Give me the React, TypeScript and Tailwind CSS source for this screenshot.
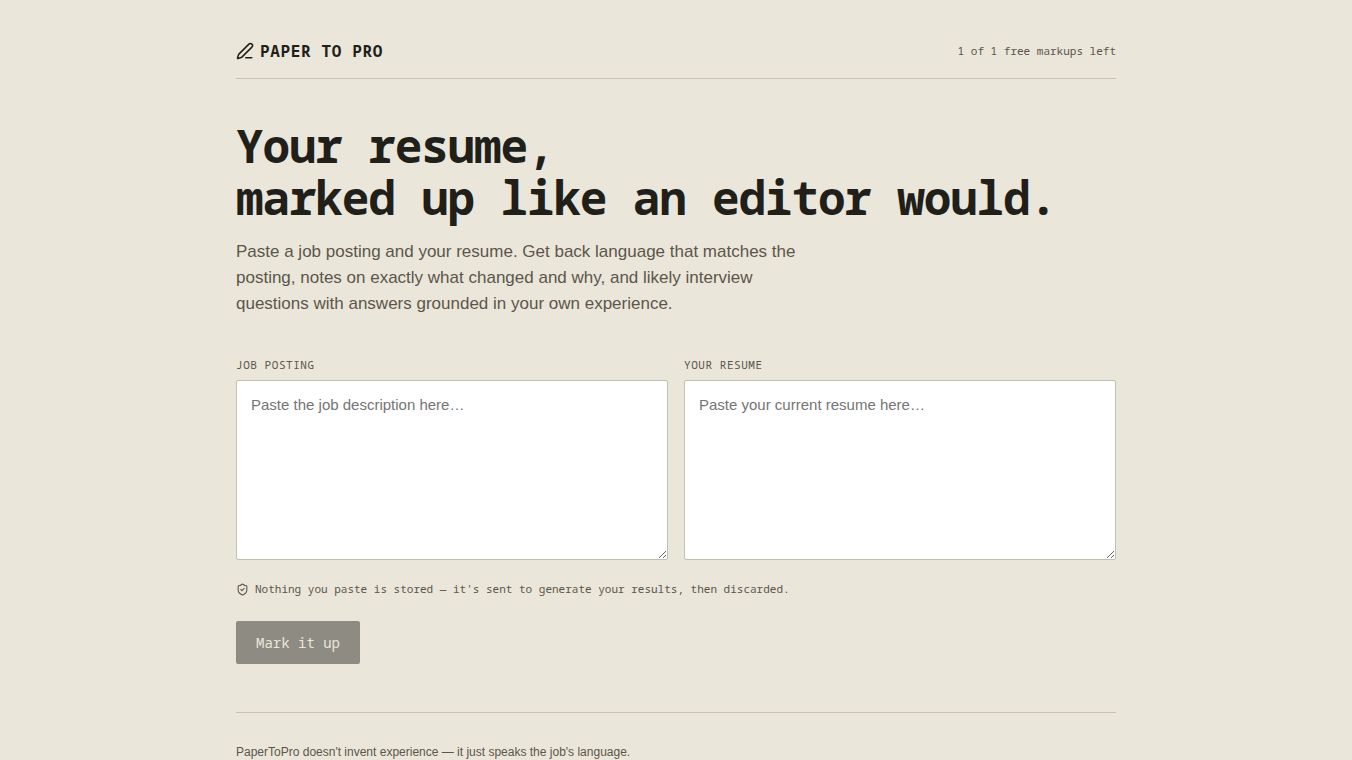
import { useState } from "react";
import { PenLine, ShieldCheck } from "lucide-react";

const mono = "font-['Noto_Sans_Mono',monospace]";

type FieldProps = {
  id: string;
  label: string;
  placeholder: string;
  value: string;
  onChange: (value: string) => void;
};

function PasteField({ id, label, placeholder, value, onChange }: FieldProps) {
  return (
    <div className="flex flex-col gap-2">
      <label htmlFor={id} className={`${mono} text-[11px] leading-[15px] tracking-[0.05em] uppercase text-[#5c564a]`}>
        {label}
      </label>
      <textarea
        id={id}
        value={value}
        onChange={(e) => onChange(e.target.value)}
        placeholder={placeholder}
        className="block h-[180px] w-full resize-y rounded-[2px] border border-[#c4beae] bg-white px-[14px] py-3 text-[15px] leading-6 text-[#211f1a] placeholder:text-[#757575]"
      />
    </div>
  );
}

export default function App() {
  const [posting, setPosting] = useState("");
  const [resume, setResume] = useState("");
  const ready = posting.trim() !== "" && resume.trim() !== "";

  return (
    <div className="min-h-screen bg-[#eae6da] font-['Liberation_Sans',sans-serif] text-[#211f1a]">
      <div className="mx-auto max-w-[928px] px-6 pt-10 pb-20">
        <header className="flex items-center justify-between border-b border-[#c9c1b1] pb-4">
          <div className={`${mono} flex items-center gap-[6px] text-base leading-[22px] font-bold tracking-[0.04em]`}>
            <PenLine size={18} strokeWidth={2} aria-hidden="true" />
            PAPER TO PRO
          </div>
          <span className={`${mono} text-[11px] leading-[18px] text-[#5c564a]`}>1 of 1 free markups left</span>
        </header>

        <main>
          <section className="pt-10">
            <h1 className={`${mono} text-[46px] leading-[52px] font-bold tracking-tight`}>
              Your resume,
              <br />
              marked up like an editor would.
            </h1>
            <p className="mt-4 max-w-[560px] text-[17px] leading-[26px] text-[#5c564a]">
              Paste a job posting and your resume. Get back language that matches the posting, notes on exactly what
              changed and why, and likely interview questions with answers grounded in your own experience.
            </p>
          </section>

          <form onSubmit={(e) => e.preventDefault()} className="mt-10">
            <div className="grid grid-cols-1 gap-4 md:grid-cols-2">
              <PasteField
                id="posting"
                label="Job posting"
                placeholder="Paste the job description here…"
                value={posting}
                onChange={setPosting}
              />
              <PasteField
                id="resume"
                label="Your resume"
                placeholder="Paste your current resume here…"
                value={resume}
                onChange={setResume}
              />
            </div>
            <p className={`${mono} mt-5 flex items-center gap-[6px] text-[11px] leading-[18px] text-[#5c564a]`}>
              <ShieldCheck size={13} strokeWidth={2} className="shrink-0" aria-hidden="true" />
              Nothing you paste is stored — it's sent to generate your results, then discarded.
            </p>
            <button
              type="submit"
              disabled={!ready}
              className={`${mono} mt-[23px] rounded-[2px] bg-[#211f1a] px-5 py-3 text-sm leading-[19px] text-[#eae6da] disabled:opacity-45`}
            >
              Mark it up
            </button>
          </form>
        </main>

        <footer className="mt-12 border-t border-[#c9c1b1] pt-[30px] text-xs leading-[18px] text-[#5c564a]">
          PaperToPro doesn't invent experience — it just speaks the job's language.
        </footer>
      </div>
    </div>
  );
}
